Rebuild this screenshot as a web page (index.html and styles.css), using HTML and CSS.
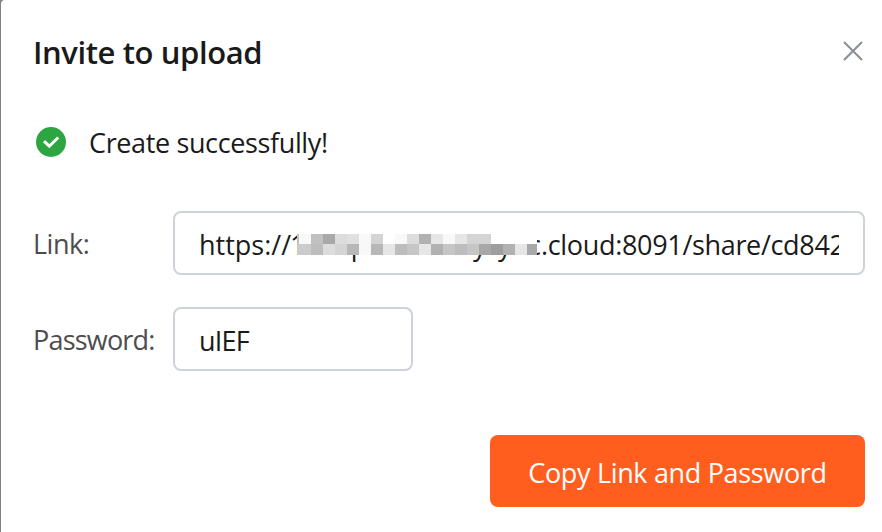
FILE: index.html
```html
<!DOCTYPE html>
<html lang="en">
<head>
    <meta charset="UTF-8">
    <meta name="viewport" content="width=device-width, initial-scale=1.0">
    <title>Invite to upload</title>
    <link rel="stylesheet" href="styles.css">
</head>
<body>
    <div class="dialog">
        <div class="dialog-header">
            <h2>Invite to upload</h2>
            <button class="close-btn" aria-label="Close">
                <svg width="20" height="20" viewBox="0 0 20 20"><path d="M1 1L19 19M19 1L1 19"/></svg>
            </button>
        </div>

        <div class="status">
            <svg width="30" height="30" viewBox="0 0 30 30">
                <circle cx="15" cy="15" r="15" fill="#2da641"/>
                <path d="M8 14.2L13.3 19.2L22.2 10.5" fill="none" stroke="#fff" stroke-width="3"/>
            </svg>
            <span class="status-text">Create successfully!</span>
        </div>

        <div class="form-row">
            <span class="label">Link:</span>
            <div class="field link-field">
                <div class="field-value">
                    <span class="link-start">https://</span>
                    <!-- Masked host name -->
                    <svg class="mask" width="250" height="60" viewBox="291 213 250 60">
                        <g class="mask-text">
                            <text x="290" y="255">1</text>
                            <text x="341" y="255">q</text>
                            <text x="473" y="255">y</text>
                            <text x="498" y="255">y</text>
                            <text x="528" y="255">c</text>
                        </g>
                        <g shape-rendering="crispEdges">
                            <path fill="#fff" d="M297 230h240v25h-240z"/>
                            <path fill="#c0c0c0" d="M297 234h2v10h-2zM311 234h12v10h-12z"/>
                            <path fill="#f8f8f8" d="M299 234h12v10h-12zM359 234h12v21h-12zM395 234h12v10h-12zM443 234h12v10h-12z"/>
                            <path fill="#a8a8a8" d="M323 234h12v10h-12zM479 244h12v11h-12zM527 244h10v11h-10z"/>
                            <path fill="#dcdcdc" d="M335 234h12v10h-12zM407 234h12v10h-12zM323 244h12v11h-12z"/>
                            <path fill="#e0e0e0" d="M347 234h12v10h-12z"/>
                            <path fill="#d4d4d4" d="M371 234h12v10h-12zM467 234h24v10h-24zM335 244h12v11h-12z"/>
                            <path fill="#b1b1b1" d="M419 234h12v10h-12zM431 244h12v11h-12zM503 244h12v11h-12z"/>
                            <path fill="#e6e6e6" d="M431 234h12v10h-12zM455 234h12v10h-12zM383 244h12v11h-12zM419 244h12v11h-12zM515 244h12v11h-12z"/>
                            <path fill="#cbcbcb" d="M297 244h14v11h-14z"/>
                            <path fill="#bdbdbd" d="M311 244h12v11h-12zM395 244h12v11h-12zM455 244h12v11h-12z"/>
                            <path fill="#b7b7b7" d="M347 244h12v11h-12zM371 244h12v11h-12z"/>
                            <path fill="#c6c6c6" d="M407 244h12v11h-12zM443 244h12v11h-12zM467 244h12v11h-12z"/>
                            <path fill="#9e9e9e" d="M491 244h12v11h-12z"/>
                        </g>
                    </svg>
                    <span class="link-end">.cloud:8091/share/cd842</span>
                </div>
            </div>
        </div>

        <div class="form-row">
            <span class="label label-password">Password:</span>
            <div class="field password-field">
                <div class="field-value"><span class="password">uIEF</span></div>
            </div>
        </div>

        <div class="dialog-footer">
            <button class="copy-btn">Copy Link and Password</button>
        </div>
    </div>
</body>
</html>
```

FILE: styles.css
```css
/* Background and general styling */
* {
    box-sizing: border-box;
}

body {
    margin: 0;
    height: 532px;
    background: #808080;
    font-family: "Open Sans", "Noto Sans", sans-serif;
    font-size: 27px;
    color: #1a1a1a;
    overflow: hidden;
}

/* Dialog */
.dialog {
    height: 532px;
    margin-left: 1px;
    padding: 0 17px 0 32px;
    background: #fff;
    border-top-left-radius: 4px;
}

.dialog-header {
    display: flex;
    justify-content: space-between;
    align-items: center;
    height: 106px;
}

h2 {
    margin: 0;
    padding-bottom: 2px;
    font-size: 31px;
    font-weight: 600;
    letter-spacing: -0.4px;
    white-space: nowrap;
}

.close-btn {
    display: flex;
    margin: 0 2px 4px 0;
    padding: 0;
    border: none;
    background: none;
}

.close-btn path {
    fill: none;
    stroke: #868e96;
    stroke-width: 2;
}

.status {
    display: flex;
    align-items: center;
    gap: 23px;
    height: 72px;
    margin-bottom: 33px;
    padding-left: 3px;
    white-space: nowrap;
}

.status-text {
    padding-top: 1px;
    letter-spacing: -0.37px;
}

/* Form */
.form-row {
    display: flex;
    align-items: center;
    height: 64px;
    margin-bottom: 32px;
}

.label {
    width: 140px;
    color: #4d4d4d;
    letter-spacing: -0.5px;
    white-space: nowrap;
}

.label-password {
    letter-spacing: -0.8px;
}

.field {
    height: 64px;
    padding: 0 24px;
    border: 2px solid #ced2da;
    border-radius: 8px;
}

.link-field {
    width: 692px;
}

.password-field {
    width: 240px;
}

.field-value {
    display: flex;
    align-items: center;
    height: 60px;
    overflow: hidden;
    white-space: nowrap;
}

.link-start {
    flex: none;
    width: 92px;
    padding-top: 2px;
}

.link-end {
    padding-top: 2px;
    letter-spacing: -0.33px;
}

.password {
    padding-top: 2px;
    letter-spacing: -0.8px;
}

.mask {
    flex: none;
}

.mask-text {
    fill: #1a1a1a;
}

/* Footer */
.dialog-footer {
    display: flex;
    justify-content: flex-end;
    margin-top: 64px;
}

.copy-btn {
    width: 375px;
    height: 72px;
    padding: 2px 0 0;
    border: none;
    border-radius: 8px;
    background: #ff5e1f;
    color: #fff;
    font-family: inherit;
    font-size: 27px;
    letter-spacing: -0.33px;
    white-space: nowrap;
}
```
